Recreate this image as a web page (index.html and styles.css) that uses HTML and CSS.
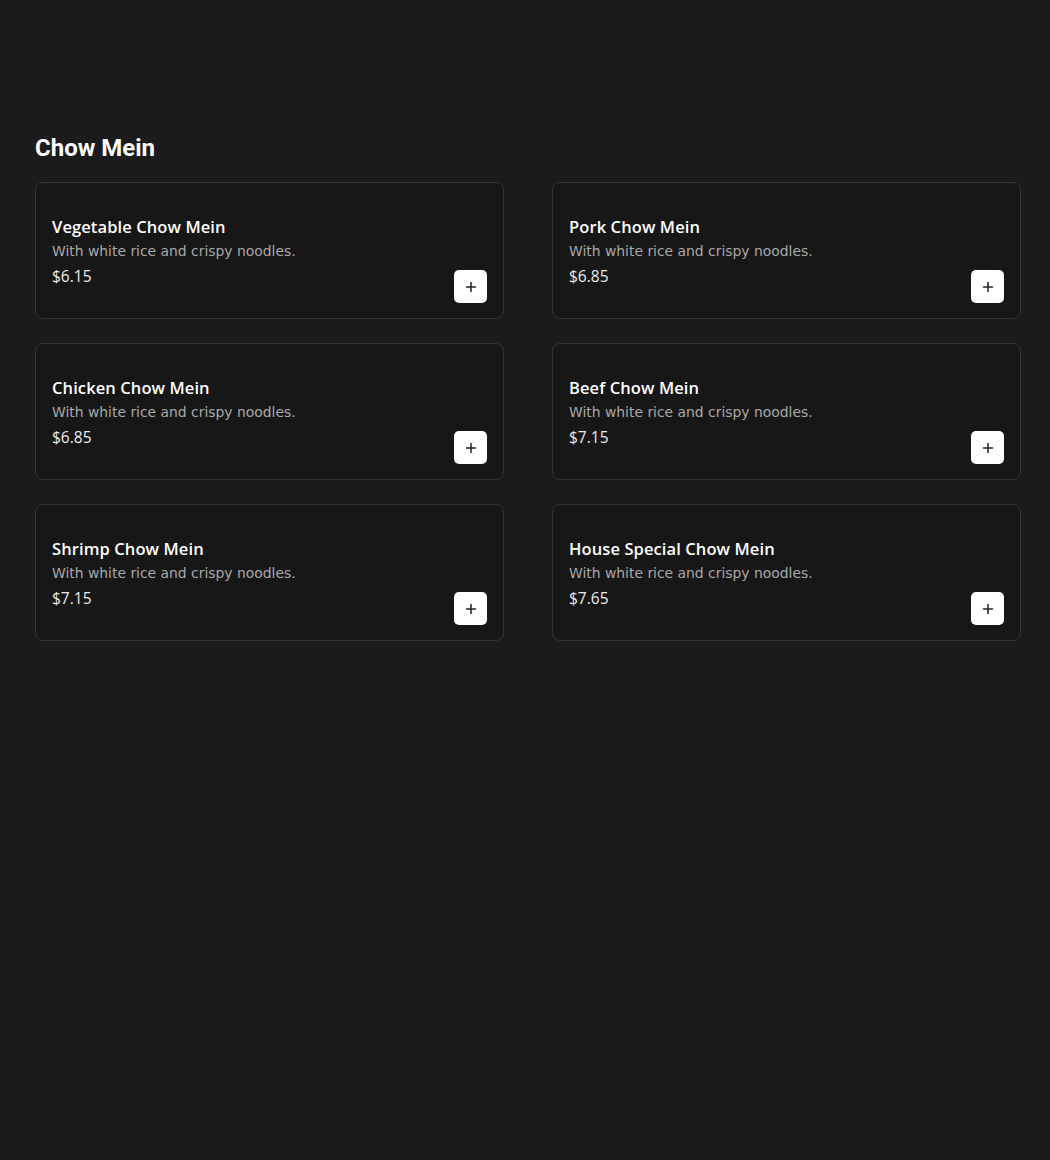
FILE: index.html
```html
<!DOCTYPE html>
<html lang="en">
<head>
<meta charset="utf-8">
<title>Chow Mein</title>
<link rel="stylesheet" href="styles.css">
</head>
<body>
<main class="page">
  <section class="category">
    <h2 class="category-title">Chow Mein</h2>
    <div class="grid">
      <article class="card">
        <div class="info">
          <h3 class="name">Vegetable Chow Mein</h3>
          <p class="desc">With white rice and crispy noodles.</p>
          <p class="price">$6.15</p>
        </div>
        <button class="add" aria-label="Add"><svg viewBox="0 0 12 12" width="12" height="12"><path d="M6 1.5v9M1.5 6h9" stroke="#222" stroke-width="1.5" stroke-linecap="round"/></svg></button>
      </article>
      <article class="card">
        <div class="info">
          <h3 class="name">Pork Chow Mein</h3>
          <p class="desc">With white rice and crispy noodles.</p>
          <p class="price">$6.85</p>
        </div>
        <button class="add" aria-label="Add"><svg viewBox="0 0 12 12" width="12" height="12"><path d="M6 1.5v9M1.5 6h9" stroke="#222" stroke-width="1.5" stroke-linecap="round"/></svg></button>
      </article>
      <article class="card">
        <div class="info">
          <h3 class="name">Chicken Chow Mein</h3>
          <p class="desc">With white rice and crispy noodles.</p>
          <p class="price">$6.85</p>
        </div>
        <button class="add" aria-label="Add"><svg viewBox="0 0 12 12" width="12" height="12"><path d="M6 1.5v9M1.5 6h9" stroke="#222" stroke-width="1.5" stroke-linecap="round"/></svg></button>
      </article>
      <article class="card">
        <div class="info">
          <h3 class="name">Beef Chow Mein</h3>
          <p class="desc">With white rice and crispy noodles.</p>
          <p class="price">$7.15</p>
        </div>
        <button class="add" aria-label="Add"><svg viewBox="0 0 12 12" width="12" height="12"><path d="M6 1.5v9M1.5 6h9" stroke="#222" stroke-width="1.5" stroke-linecap="round"/></svg></button>
      </article>
      <article class="card">
        <div class="info">
          <h3 class="name">Shrimp Chow Mein</h3>
          <p class="desc">With white rice and crispy noodles.</p>
          <p class="price">$7.15</p>
        </div>
        <button class="add" aria-label="Add"><svg viewBox="0 0 12 12" width="12" height="12"><path d="M6 1.5v9M1.5 6h9" stroke="#222" stroke-width="1.5" stroke-linecap="round"/></svg></button>
      </article>
      <article class="card">
        <div class="info">
          <h3 class="name">House Special Chow Mein</h3>
          <p class="desc">With white rice and crispy noodles.</p>
          <p class="price">$7.65</p>
        </div>
        <button class="add" aria-label="Add"><svg viewBox="0 0 12 12" width="12" height="12"><path d="M6 1.5v9M1.5 6h9" stroke="#222" stroke-width="1.5" stroke-linecap="round"/></svg></button>
      </article>
    </div>
  </section>
</main>
</body>
</html>
```
FILE: styles.css
```css
html, body {
  margin: 0;
  padding: 0;
  background: #1b1b1b;
  height: 100%;
}
body {
  font-family: "DejaVu Sans", "Open Sans", sans-serif;
  color: #ffffff;
}
.page {
  padding: 131px 29px 0 35px;
}
.category-title {
  font-family: Roboto, "Liberation Sans", sans-serif;
  font-weight: 700;
  font-size: 24px;
  line-height: 34px;
  margin: 0 0 17px 0;
  color: #ffffff;
}
.grid {
  display: grid;
  grid-template-columns: 469px 469px;
  column-gap: 48px;
  row-gap: 24px;
}
.card {
  box-sizing: border-box;
  height: 137px;
  border: 1px solid #353535;
  border-radius: 8px;
  background: #171717;
  padding: 16px 16px 15px 16px;
  display: flex;
  justify-content: space-between;
  align-items: center;
}
.info {
  display: flex;
  flex-direction: column;
}
.name {
  margin: 0;
  font-family: "Open Sans", "DejaVu Sans", sans-serif;
  font-size: 16.5px;
  font-weight: 600;
  line-height: 25px;
  color: #ffffff;
  letter-spacing: 0.1px;
}
.desc {
  margin: 0;
  font-size: 13.9px;
  line-height: 25px;
  color: #a9a9a9;
}
.price {
  margin: 0;
  font-family: "Open Sans", "DejaVu Sans", sans-serif;
  font-size: 15.5px;
  line-height: 25px;
  color: #ececec;
}
.add {
  align-self: flex-end;
  width: 33px;
  height: 33px;
  border: none;
  border-radius: 5px;
  background: #ffffff;
  display: flex;
  align-items: center;
  justify-content: center;
  padding: 0;
  cursor: pointer;
}
.add svg {
  display: block;
}
```
